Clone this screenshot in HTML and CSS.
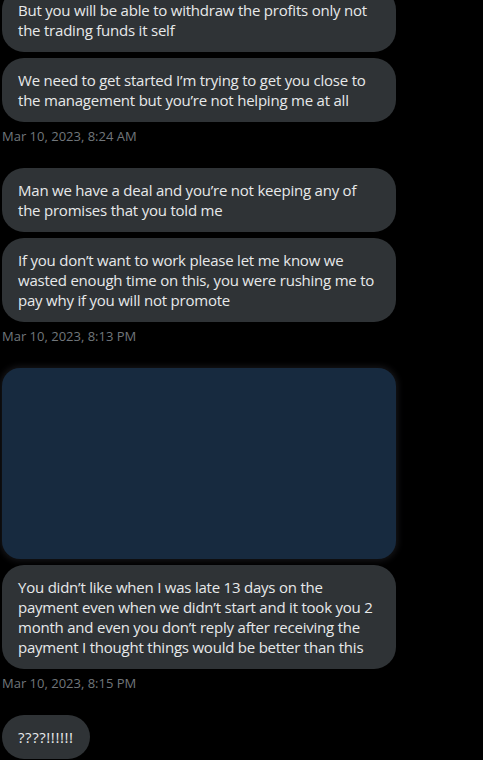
FILE: index.html
```html
<!DOCTYPE html>
<html>
<head>
<meta charset="utf-8">
<link rel="stylesheet" href="styles.css">
</head>
<body>
<div class="thread">
  <div class="group">
    <div class="bubble">But you will be able to withdraw the profits only not the trading funds it self</div>
    <div class="bubble">We need to get started I’m trying to get you close to the management but you’re not helping me at all</div>
    <div class="stamp">Mar 10, 2023, 8:24 AM</div>
  </div>
  <div class="group">
    <div class="bubble">Man we have a deal and you’re not keeping any of the promises that you told me</div>
    <div class="bubble">If you don’t want to work please let me know we wasted enough time on this, you were rushing me to pay why if you will not promote</div>
    <div class="stamp">Mar 10, 2023, 8:13 PM</div>
  </div>
  <div class="group">
    <div class="media"></div>
    <div class="bubble">You didn’t like when I was late 13 days on the payment even when we didn’t start and it took you 2 month and even you don’t reply after receiving the payment I thought things would be better than this</div>
    <div class="stamp">Mar 10, 2023, 8:15 PM</div>
  </div>
  <div class="group">
    <div class="bubble bubble-short">????!!!!!!</div>
  </div>
</div>
</body>
</html>
```
FILE: styles.css
```css
html, body {
  margin: 0;
  padding: 0;
  background: #000;
}
body {
  width: 483px;
  height: 760px;
  overflow: hidden;
  font-family: "Open Sans", "Liberation Sans", sans-serif;
  color: #e7e9ea;
}
.thread {
  display: flex;
  flex-direction: column;
  gap: 24px;
  width: 394px;
  margin-top: -12px;
  padding-left: 2px;
}
.group {
  display: flex;
  flex-direction: column;
  align-items: flex-start;
  gap: 6px;
}
.bubble {
  box-sizing: border-box;
  max-width: 394px;
  background: #2f3336;
  border-radius: 22px;
  padding: 12px 16px;
  font-size: 15px;
  line-height: 20px;
  letter-spacing: -0.22px;
}
.bubble-short {
  letter-spacing: 0.6px;
}
.stamp {
  font-size: 13px;
  line-height: 16px;
  color: #71767b;
}
.media {
  box-sizing: border-box;
  width: 394px;
  height: 191px;
  background: #172a3f;
  border-radius: 18px;
  box-shadow: 0 0 6px 2px rgba(60, 60, 70, 0.35);
}
```
